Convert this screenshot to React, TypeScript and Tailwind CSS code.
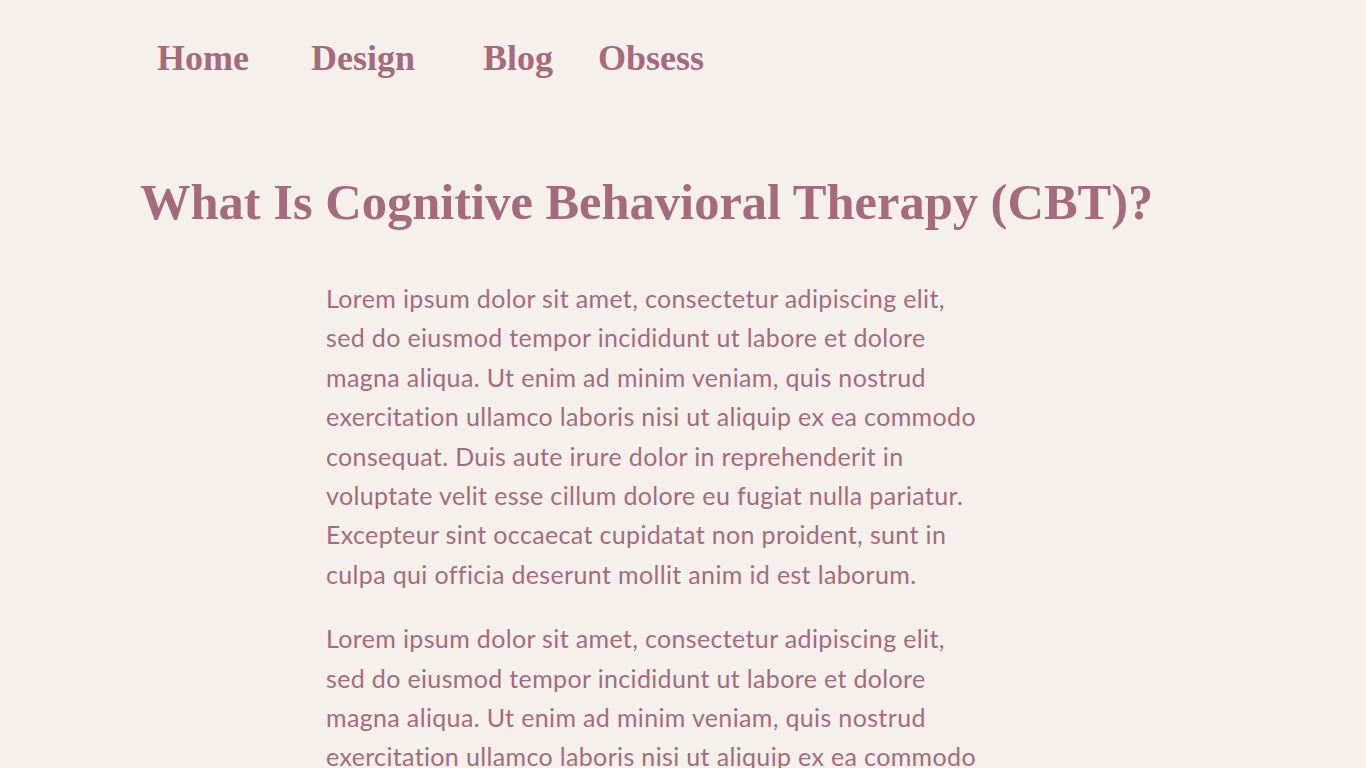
import React from "react";

const lorem =
  "Lorem ipsum dolor sit amet, consectetur adipiscing elit, sed do eiusmod tempor incididunt ut labore et dolore magna aliqua. Ut enim ad minim veniam, quis nostrud exercitation ullamco laboris nisi ut aliquip ex ea commodo consequat. Duis aute irure dolor in reprehenderit in voluptate velit esse cillum dolore eu fugiat nulla pariatur. Excepteur sint occaecat cupidatat non proident, sunt in culpa qui officia deserunt mollit anim id est laborum.";

const App = () => {
  return (
    <div className="min-h-screen bg-[#f6f0ed] text-[#a56b7c]">
      {/* Nav */}
      <nav className="flex items-center pl-[157px] pt-[34px] font-['Liberation_Serif',serif] text-[36px] font-bold leading-[48px]">
        <a href="#" className="w-[154px]">Home</a>
        <a href="#" className="w-[172px]">Design</a>
        <a href="#" className="w-[115px]">Blog</a>
        <a href="#">Obsess</a>
      </nav>

      {/* Article */}
      <main className="pl-[140px] pt-[88px]">
        <h1 className="font-['Liberation_Serif',serif] text-[50.5px] font-bold leading-[64px]">
          What Is Cognitive Behavioral Therapy (CBT)?
        </h1>
        <div className="mt-[45px] ml-[186px] w-[660px] font-['Lato',sans-serif] text-[25px] leading-[39.4px] tracking-[0.35px] [font-variant-ligatures:none]">
          <p>{lorem}</p>
          <p className="mt-[25px]">{lorem}</p>
        </div>
      </main>
    </div>
  );
};

export default App;
